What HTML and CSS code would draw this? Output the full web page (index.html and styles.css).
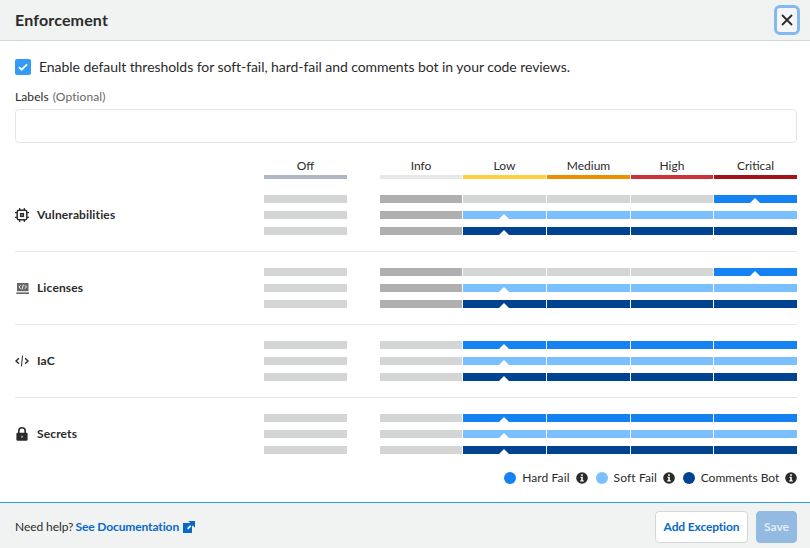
FILE: index.html
```html
<!DOCTYPE html>
<html lang="en">
<head>
<meta charset="utf-8">
<title>Enforcement</title>
<link rel="stylesheet" href="styles.css">
</head>
<body>
<div class="dialog">
  <header class="header">
    <h1 class="title">Enforcement</h1>
    <button class="close" aria-label="Close"><svg width="12" height="12" viewBox="0 0 12 12"><path d="M1 1l10 10M11 1L1 11" fill="none" stroke="#2b2b2b" stroke-width="1.8"/></svg></button>
  </header>
  <main class="content">
    <div class="enable">
      <span class="checkbox"><svg width="16" height="16" viewBox="0 0 16 16"><path d="M4 8.2l2.6 2.5L12 5.3" fill="none" stroke="#fff" stroke-width="1.8"/></svg></span>
      <span class="enable-text">Enable default thresholds for soft-fail, hard-fail and comments bot in your code reviews.</span>
    </div>
    <label class="labels" for="labels"><span class="labels-name">Labels</span><span class="optional">(Optional)</span></label>
    <input class="input" id="labels" type="text">

    <div class="line heads">
      <span></span>
      <span class="head off">Off</span>
      <div class="levels">
        <span class="head info">Info</span><span class="head low">Low</span><span class="head medium">Medium</span><span class="head high">High</span><span class="head critical">Critical</span>
      </div>
    </div>

    <section class="line row">
      <div class="name"><svg class="icon" width="14" height="14" viewBox="0 0 14 14"><rect x="2.2" y="2.2" width="9.6" height="9.6" rx="1.6" fill="none" stroke="#2b2b2b" stroke-width="1.5"/><path d="M4.7 0v2M9.3 0v2M4.7 12v2M9.3 12v2M0 4.7h2M0 9.3h2M12 4.7h2M12 9.3h2" stroke="#2b2b2b" stroke-width="1.2"/><rect x="5.5" y="5.5" width="3" height="3" fill="#777" stroke="#2b2b2b" stroke-width="1.2"/></svg>Vulnerabilities</div>
      <div class="bars"><i></i><i></i><i></i></div>
      <div class="bars">
        <div class="levels hard"><i class="past"></i><i></i><i></i><i></i><i class="on mark"></i></div>
        <div class="levels soft"><i class="past"></i><i class="on mark"></i><i class="on"></i><i class="on"></i><i class="on"></i></div>
        <div class="levels bot"><i class="past"></i><i class="on mark"></i><i class="on"></i><i class="on"></i><i class="on"></i></div>
      </div>
    </section>
    <section class="line row">
      <div class="name"><svg class="icon" width="14" height="14" viewBox="0 0 14 14"><path d="M2 2h11.5v8.2H2z" fill="#666"/><path d="M1.3 11.4h12.7v1.6H1.3z" fill="#666"/><path d="M5.6 4.2L4 6l1.6 1.8M9.8 4.2L11.4 6 9.8 7.8M8.4 3.6L7 8.4" fill="none" stroke="#fff" stroke-width=".9"/></svg>Licenses</div>
      <div class="bars"><i></i><i></i><i></i></div>
      <div class="bars">
        <div class="levels hard"><i class="past"></i><i></i><i></i><i></i><i class="on mark"></i></div>
        <div class="levels soft"><i class="past"></i><i class="on mark"></i><i class="on"></i><i class="on"></i><i class="on"></i></div>
        <div class="levels bot"><i class="past"></i><i class="on mark"></i><i class="on"></i><i class="on"></i><i class="on"></i></div>
      </div>
    </section>
    <section class="line row">
      <div class="name"><svg class="icon" width="14" height="14" viewBox="0 0 14 14"><path d="M3.9 4.2L1 7l2.9 2.8M10.1 4.2L13 7l-2.9 2.8" fill="none" stroke="#2b2b2b" stroke-width="1.4"/><path d="M7.6 1.5L6.4 12.5" stroke="#2b2b2b" stroke-width="1"/></svg>IaC</div>
      <div class="bars"><i></i><i></i><i></i></div>
      <div class="bars">
        <div class="levels hard"><i></i><i class="on mark"></i><i class="on"></i><i class="on"></i><i class="on"></i></div>
        <div class="levels soft"><i></i><i class="on mark"></i><i class="on"></i><i class="on"></i><i class="on"></i></div>
        <div class="levels bot"><i></i><i class="on mark"></i><i class="on"></i><i class="on"></i><i class="on"></i></div>
      </div>
    </section>
    <section class="line row">
      <div class="name"><svg class="icon" width="14" height="14" viewBox="0 0 14 14"><path d="M3.8 6.5V4a3.2 3.2 0 016.4 0v2.5" fill="none" stroke="#2b2b2b" stroke-width="1.6"/><rect x="1.4" y="5.7" width="11.2" height="8.1" rx="1.2" fill="#2b2b2b"/><path d="M6.5 8.8h1v2h-1z" fill="#fff"/></svg>Secrets</div>
      <div class="bars"><i></i><i></i><i></i></div>
      <div class="bars">
        <div class="levels hard"><i></i><i class="on mark"></i><i class="on"></i><i class="on"></i><i class="on"></i></div>
        <div class="levels soft"><i></i><i class="on mark"></i><i class="on"></i><i class="on"></i><i class="on"></i></div>
        <div class="levels bot"><i></i><i class="on mark"></i><i class="on"></i><i class="on"></i><i class="on"></i></div>
      </div>
    </section>

    <div class="legend">
      <div class="key hard"><b class="dot"></b><span>Hard Fail</span><svg width="12" height="12" viewBox="0 0 12 12"><circle cx="6" cy="6" r="5.8" fill="#2b2b2b"/><path d="M5.1 2.3h1.8v1.5H5.1zM4.4 4.8h2.4v3.5h.9v1.1H4.3V8.3h.9V5.8h-.8z" fill="#fff"/></svg></div>
      <div class="key soft"><b class="dot"></b><span>Soft Fail</span><svg width="12" height="12" viewBox="0 0 12 12"><circle cx="6" cy="6" r="5.8" fill="#2b2b2b"/><path d="M5.1 2.3h1.8v1.5H5.1zM4.4 4.8h2.4v3.5h.9v1.1H4.3V8.3h.9V5.8h-.8z" fill="#fff"/></svg></div>
      <div class="key bot"><b class="dot"></b><span>Comments Bot</span><svg width="12" height="12" viewBox="0 0 12 12"><circle cx="6" cy="6" r="5.8" fill="#2b2b2b"/><path d="M5.1 2.3h1.8v1.5H5.1zM4.4 4.8h2.4v3.5h.9v1.1H4.3V8.3h.9V5.8h-.8z" fill="#fff"/></svg></div>
    </div>
  </main>
  <footer class="footer">
    <div class="help"><span class="ask">Need help?</span><a class="link">See Documentation</a><svg width="12" height="12" viewBox="0 0 12 12"><path d="M0 2h9v10H0z" fill="#0869c8"/><path d="M4.6 7.9L8.6 3.9" stroke="#f1f3f2" stroke-width="1.8"/><path d="M5.3 0H12v6.7L9.9 4.6 8.7 5.8 6.2 3.3 7.4 2.1z" fill="#0869c8"/></svg></div>
    <button class="button add">Add Exception</button>
    <button class="button save">Save</button>
  </footer>
</div>
</body>
</html>
```
FILE: styles.css
```css
* { box-sizing: border-box; }
body { margin: 0; background: #fff; color: #2b2b2b; font: 12px/16px Lato, "Liberation Sans", sans-serif; }
button, input { font: inherit; margin: 0; padding: 0; }
svg { display: block; flex: none; }
.dialog { display: flex; flex-direction: column; width: 810px; height: 548px; }
.header { display: flex; align-items: center; justify-content: space-between; height: 41px; padding: 0 10px 1px 15px; background: #f1f3f2; border-bottom: 1px solid #d4d6d5; }
.title { margin: 0; font-size: 16px; line-height: 20px; font-weight: 700; letter-spacing: .16px; }
.close { display: flex; align-items: center; justify-content: center; width: 26px; height: 30px; background: #f4f5f4; border: 3px solid #82b9f2; border-radius: 6px; }
.content { flex: 1; padding: 18px 13px 0 15px; }
.enable { display: flex; align-items: center; gap: 8px; height: 16px; }
.enable-text { font-size: 14px; letter-spacing: -.055px; white-space: nowrap; }
.checkbox { width: 16px; height: 16px; background: #339af9; border-radius: 2px; }
.labels { display: flex; gap: 4px; height: 16px; margin-top: 14px; letter-spacing: .1px; }
.optional { color: #666; }
.input { display: block; width: 100%; height: 34px; margin-top: 4px; border: 1px solid #e4e5e5; border-radius: 4px; }
.line { display: grid; grid-template-columns: 216px 83px 417px; column-gap: 33px; }
.heads { margin-top: 15px; height: 21px; }
.levels { display: grid; grid-template-columns: 82px 83px 83px 82px 83px; column-gap: 1px; }
.head { height: 21px; border-bottom: 4px solid; text-align: center; color: #2b2b2b; }
.off { border-color: #adb7c6; }
.info { border-color: #e7e8e8; }
.low { border-color: #ffd03d; }
.medium { border-color: #ec8f00; }
.high { border-color: #cc3336; }
.critical { border-color: #a31518; }
.row { height: 73px; padding-top: 16px; border-bottom: 1px solid #e5e6e6; }
.row:nth-last-child(2) { border-bottom: 0; height: 56px; }
.name { display: flex; align-items: center; gap: 8px; height: 40px; font-weight: 700; letter-spacing: .14px; }
.bars { display: grid; grid-auto-rows: 8px; row-gap: 8px; }
.bars i { display: block; height: 8px; background: #d4d6d5; }
.bars .past { background: #aeafae; }
.hard { --tone: #1482f2; }
.soft { --tone: #7ac0ff; }
.bot { --tone: #004391; }
.bars .on { background: var(--tone); }
.mark::after { content: ""; display: block; width: 10px; height: 8px; margin-left: 36px; background: #fff; clip-path: polygon(50% 36%, 100% 100%, 0 100%); }
.legend { display: flex; justify-content: flex-end; gap: 8px; margin-top: 16px; }
.key { display: flex; align-items: center; gap: 6px; }
.key.hard span { letter-spacing: .1px; }
.key.soft span { letter-spacing: .12px; }
.key.bot { gap: 5.7px; }
.dot { width: 12px; height: 12px; border-radius: 50%; background: var(--tone); }
.footer { display: flex; align-items: center; gap: 8px; height: 46px; padding: 3px 13px 0 15px; background: #f1f3f2; border-top: 1px solid #3297f5; }
.help { display: flex; align-items: center; flex: 1; }
.help svg { margin-left: 4px; }
.ask { width: 60.5px; letter-spacing: -.07px; white-space: nowrap; }
.link { color: #0869c8; font-weight: 700; letter-spacing: -.12px; }
.button { height: 32px; border: 1px solid #d5d7d6; border-radius: 4px; background: #fff; color: #0869c8; font-weight: 700; }
.add { width: 93px; letter-spacing: -.14px; }
.save { width: 41px; background: #93bae0; border-color: #93bae0; color: #e4edf5; }
```
